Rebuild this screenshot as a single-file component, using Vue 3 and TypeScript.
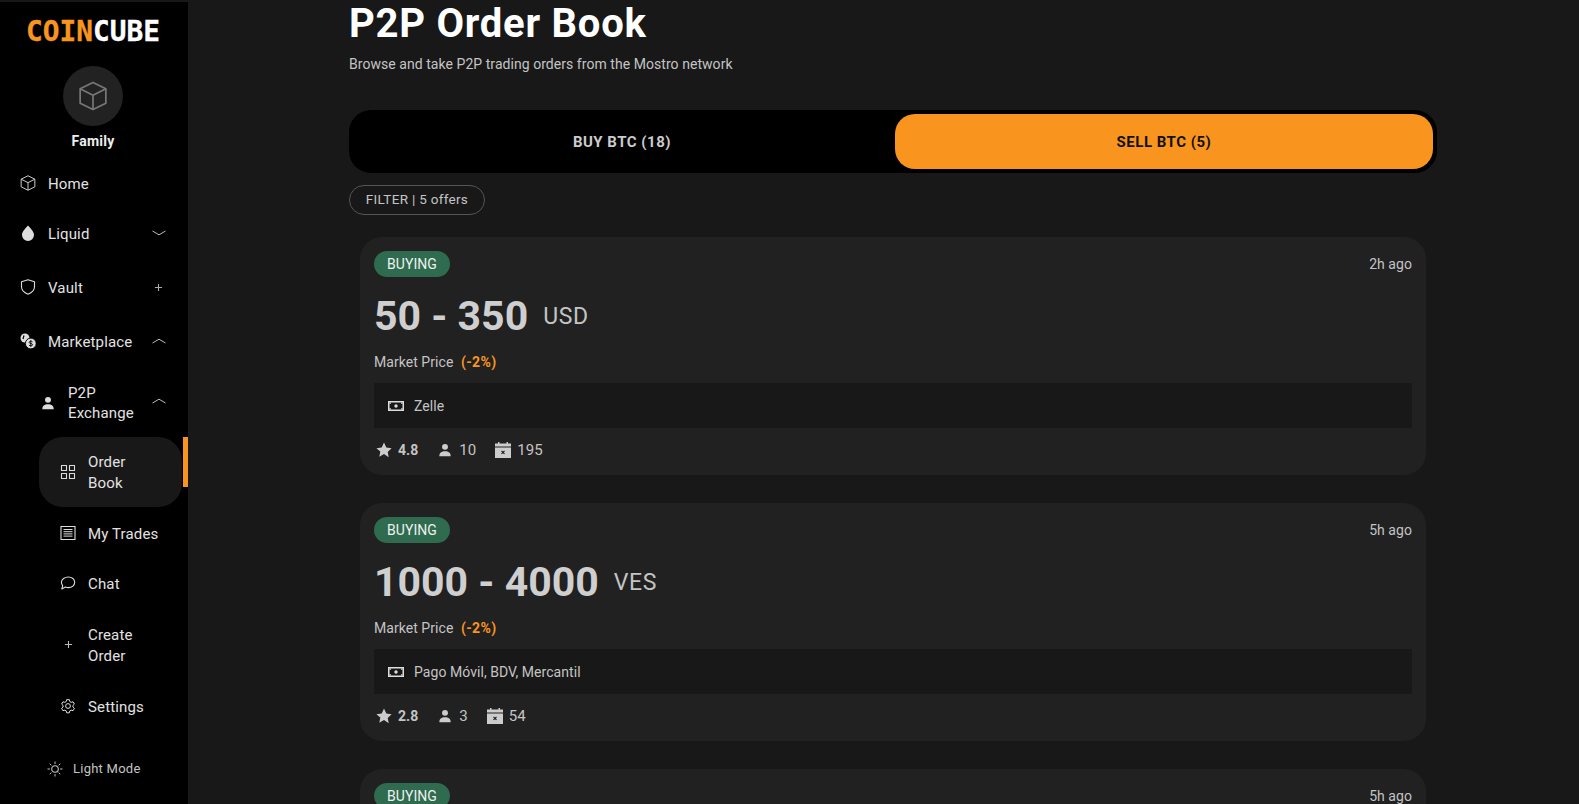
<script setup lang="ts">
interface Order { age: string; range: string; cur: string; pay: string; rating: string; people: string; trades: string }
const orders: Order[] = [
  { age: '2h ago', range: '50 - 350', cur: 'USD', pay: 'Zelle', rating: '4.8', people: '10', trades: '195' },
  { age: '5h ago', range: '1000 - 4000', cur: 'VES', pay: 'Pago Móvil, BDV, Mercantil', rating: '2.8', people: '3', trades: '54' },
  { age: '5h ago', range: '100 - 500', cur: 'USD', pay: 'Zelle', rating: '4.5', people: '8', trades: '120' }
]
</script>

<template>
  <div class="app">
    <svg class="defs">
      <symbol id="cube" viewBox="2 1.500 20 21"><path d="M12 2.500 21 7v10l-9 4.500L3 17V7zM3 7l9 4.500L21 7M12 11.500v10" fill="none" stroke="currentColor" stroke-width="1.200" stroke-linejoin="round"/></symbol>
      <symbol id="user" viewBox="0 0 16 16"><circle cx="8" cy="4.400" r="3.400" fill="currentColor"/><path d="M1.500 15c0-3.900 2.400-5.600 6.500-5.600s6.500 1.700 6.500 5.600z" fill="currentColor"/></symbol>
      <symbol id="chev-up" viewBox="0 0 16 8"><path d="M1.500 6 8 2.200 14.500 6" fill="none" stroke="currentColor" stroke-width="1"/></symbol>
      <symbol id="chev-down" viewBox="0 0 16 8"><path d="M1.500 2 8 5.800 14.500 2" fill="none" stroke="currentColor" stroke-width="1"/></symbol>
      <symbol id="plus" viewBox="0 0 10 10"><path d="M5 1v8M1 5h8" stroke="currentColor" stroke-width="1.200"/></symbol>
      <symbol id="money" viewBox="0 0 16 12"><path fill-rule="evenodd" d="M0 1h16v10H0zM1.500 2.500v7h13v-7z" fill="currentColor"/><circle cx="8" cy="6" r="1.700" fill="currentColor"/><path d="M1.500 2.500h1.500v1.300h-1.500zM13 8.200h1.500v1.300H13zM13 2.500h1.500v1.300H13zM1.500 8.200H3v1.300H1.500z" fill="currentColor"/></symbol>
      <symbol id="star" viewBox="0 0 16 16"><path d="M8 .6l2.300 4.900 5.300.7-3.900 3.700 1 5.300L8 12.100l-4.700 2.600 1-5.300L.4 6.200l5.300-.7z" fill="currentColor"/></symbol>
      <symbol id="cal" viewBox="0 0 16 16"><path fill-rule="evenodd" d="M3 0h1.500v1.500h7V0H13v1.500h3V16H0V1.500h3zM0 4.500v1h16v-1z" fill="currentColor"/><path d="M6.500 8.900l3 3M9.500 8.900l-3 3" stroke="#212121" stroke-width="1.200"/></symbol>
    </svg>

    <aside class="side">
      <div class="brand">
        <div class="logo"><span class="orange">COIN</span>CUBE</div>
        <div class="avatar"><svg class="avatar-icon"><use href="#cube" /></svg></div>
        <div class="family">Family</div>
      </div>

      <nav class="nav">
        <div class="row h50"><svg class="ic"><use href="#cube" /></svg><span>Home</span></div>
        <div class="row h50 liquid">
          <svg class="ic" viewBox="0 0 16 16"><path d="M8 .5c3.200 3.700 6 6.300 6 9.500a6 6 0 0 1-12 0C2 6.800 4.800 4.200 8 .5z" fill="currentColor"/></svg>
          <span>Liquid</span><svg class="chev"><use href="#chev-down" /></svg>
        </div>
        <div class="row h54">
          <svg class="ic" viewBox="0 0 16 16"><path d="M8 .8 14.500 2.800v5c0 3.700-2.700 6-6.500 7.400-3.800-1.400-6.500-3.700-6.500-7.400v-5z" fill="none" stroke="currentColor" stroke-width="1.100" stroke-linejoin="round"/></svg>
          <span>Vault</span><svg class="plus"><use href="#plus" /></svg>
        </div>
        <div class="row h54">
          <svg class="ic" viewBox="0 0 16 16"><circle cx="5" cy="5" r="4.500" fill="currentColor"/><path d="M4 2.500 3 6" stroke="#000" stroke-width="1.200"/><circle cx="10.800" cy="10.500" r="5.400" fill="currentColor" stroke="#000"/><path d="M12.500 8.800c-1-.9-3.300-.7-3.300.6 0 1.600 3.400.7 3.400 2.300 0 1.300-2.500 1.500-3.600.5M10.800 7.200v6.600" fill="none" stroke="#000" stroke-width=".9"/></svg>
          <span>Marketplace</span><svg class="chev"><use href="#chev-up" /></svg>
        </div>
        <div class="row sub h69">
          <svg class="ic small"><use href="#user" /></svg>
          <span class="wrap tight">P2P<br />Exchange</span><svg class="chev lift"><use href="#chev-up" /></svg>
        </div>
        <div class="active-wrap">
          <div class="row active">
            <svg class="ic" viewBox="0 0 16 16"><path d="M1.500 1.500h5v5h-5zM9.500 1.500h5v5h-5zM1.500 9.500h5v5h-5zM9.500 9.500h5v5h-5z" fill="none" stroke="currentColor" stroke-width="1.100" stroke-linejoin="round"/></svg>
            <span class="wrap">Order<br />Book</span>
          </div>
          <div class="indicator"></div>
        </div>
        <div class="row leaf h50 first-leaf">
          <svg class="ic" viewBox="0 0 16 16"><path d="M1 1.500h14v13H1z" fill="none" stroke="currentColor" stroke-width="1.100"/><path d="M3.500 4.500h9M3.500 6.700h9M3.500 8.900h9M3.500 11.100h9" stroke="currentColor" stroke-width="1"/></svg>
          <span>My Trades</span>
        </div>
        <div class="row leaf h50">
          <svg class="ic" viewBox="0 0 16 16"><path d="M8.400 2c3.600 0 6.300 2.300 6.300 5.300s-2.700 5.300-6.300 5.300c-1.100 0-2.100-.2-3-.6L1.800 14l.9-3.400C1.800 9.700 1.400 8.500 1.400 7.300 1.400 4.300 4.800 2 8.400 2z" fill="none" stroke="currentColor" stroke-width="1.100" stroke-linejoin="round"/></svg>
          <span>Chat</span>
        </div>
        <div class="row leaf h73">
          <svg class="ic plus-ic"><use href="#plus" /></svg>
          <span class="wrap">Create<br />Order</span>
        </div>
        <div class="row leaf h50">
          <svg class="ic" viewBox="0 0 24 24"><path d="m10 2.500h4l.7 2.900 2 1.100 2.900-.8 2 3.400-2.200 2.100v2.300l2.200 2.100-2 3.400-2.900-.8-2 1.100-.7 2.900h-4l-.7-2.900-2-1.100-2.900.8-2-3.400 2.200-2.100v-2.300L2.400 9.100l2-3.400 2.900.8 2-1.100z" fill="none" stroke="currentColor" stroke-width="1.500" stroke-linejoin="round"/><circle cx="12" cy="12" r="3.600" fill="none" stroke="currentColor" stroke-width="1.500"/></svg>
          <span>Settings</span>
        </div>
      </nav>

      <div class="mode">
        <svg class="sun" viewBox="0 0 16 16"><circle cx="8" cy="8" r="3.300" fill="none" stroke="currentColor" stroke-width="1.100"/><path d="M8 .5v2.400M8 13.100v2.400M.5 8h2.400M13.100 8h2.400M2.700 2.700l1.700 1.700M11.600 11.600l1.700 1.700M2.700 13.300l1.700-1.700M11.600 4.400l1.700-1.700" stroke="currentColor" stroke-width="1"/></svg>
        <span>Light Mode</span>
      </div>
    </aside>

    <main class="main">
      <div class="content">
        <h1 class="title">P2P Order Book</h1>
        <p class="subtitle">Browse and take P2P trading orders from the Mostro network</p>

        <div class="tabs">
          <div class="tab">BUY BTC (18)</div>
          <div class="tab on">SELL BTC (5)</div>
        </div>

        <div class="filter"><span>FILTER | 5 offers</span></div>

        <div class="cards">
          <article v-for="o in orders" :key="o.range" class="card">
            <div class="card-top">
              <span class="badge">BUYING</span>
              <span class="age">{{ o.age }}</span>
            </div>
            <div class="amount"><b>{{ o.range }}</b><span class="cur">{{ o.cur }}</span></div>
            <div class="market">Market Price <b class="orange">(-2%)</b></div>
            <div class="pay"><svg class="money"><use href="#money" /></svg><span>{{ o.pay }}</span></div>
            <div class="stats">
              <svg class="st star"><use href="#star" /></svg><b class="rate">{{ o.rating }}</b>
              <svg class="st user"><use href="#user" /></svg><span class="num">{{ o.people }}</span>
              <svg class="st cal"><use href="#cal" /></svg><span>{{ o.trades }}</span>
            </div>
          </article>
        </div>
      </div>
    </main>
  </div>
</template>

<style>
html, body { margin: 0; background: #181818; overflow: hidden; }
</style>

<style scoped>
.app {
  display: flex;
  height: 804px;
  overflow: hidden;
  background: #181818;
  color: #e2e2e2;
  font-family: "Roboto", "Liberation Sans", sans-serif;
  letter-spacing: 0.05px;
}
.defs { display: none; }
.orange { color: #f9951e; }

.side {
  width: 188px;
  flex: none;
  background: #000;
  border-top: 2px solid #181818;
  box-sizing: border-box;
  display: flex;
  flex-direction: column;
}
.brand { width: 186px; }
.logo {
  margin-top: 12px;
  text-align: center;
  font-family: "DejaVu Sans Mono", monospace;
  font-weight: 700;
  font-size: 27.800px;
  line-height: 36px;
  color: #fff;
  letter-spacing: 0;
  -webkit-text-stroke: 0.3px currentColor;
}
.avatar {
  width: 60px;
  height: 60px;
  margin: 16px auto 0;
  border-radius: 50%;
  background: #222;
  display: flex;
  align-items: center;
  justify-content: center;
  color: #777;
}
.avatar-icon { width: 30px; height: 30px; }
.family {
  margin-top: 5px;
  text-align: center;
  font-size: 14px;
  line-height: 20px;
  font-weight: 700;
  color: #eee;
  letter-spacing: 0.25px;
}
.nav { margin-top: 7px; display: flex; flex-direction: column; font-size: 15px; line-height: 21px; letter-spacing: 0.15px; }
.row {
  display: flex;
  align-items: center;
  gap: 12px;
  padding: 0 21px 0 20px;
  box-sizing: border-box;
}
.row > span { padding-top: 2px; }
.row > span.tight { padding-top: 0; line-height: 20px; }
.h50 { height: 50px; }
.h54 { height: 54px; }
.h69 { height: 69px; }
.h73 { height: 73px; }
.liquid { margin-bottom: 2px; }
.first-leaf { margin-top: 1px; }
.ic { width: 16px; height: 16px; flex: none; color: #ddd; }
.ic.small { width: 14px; height: 14px; margin: 0 1px; }
.chev { width: 16px; height: 8px; margin-left: auto; color: #bbb; }
.chev.lift { margin-bottom: 4px; }
.plus { width: 9px; height: 9px; margin: 0 4px 0 auto; color: #aaa; }
.plus-ic { width: 9px; height: 9px; margin: 0 3.500px; color: #bbb; }
.sub { padding-left: 40px; }
.wrap { display: block; }
.active-wrap { display: flex; align-items: flex-start; height: 70px; }
.active {
  width: 143px;
  height: 70px;
  margin-left: 39px;
  padding-left: 21px;
  background: #181818;
  border-radius: 24px;
}
.indicator { width: 5px; height: 50px; margin-left: 1px; background: #f9951e; }
.leaf { padding-left: 60px; }
.mode {
  margin-top: auto;
  margin-bottom: 25px;
  display: flex;
  align-items: center;
  gap: 10px;
  padding-left: 47px;
  font-size: 13px;
  line-height: 20px;
  color: #c4c4c4;
  letter-spacing: 0.25px;
}
.sun { width: 16px; height: 16px; }

.main { flex: 1; min-width: 0; }
.content { width: 1088px; margin-left: 161px; }
.title {
  margin: 0;
  padding-top: 2px;
  font-size: 40px;
  line-height: 44px;
  font-weight: 700;
  color: #fff;
  letter-spacing: 0.75px;
}
.subtitle {
  margin: 8px 0 0;
  font-size: 14px;
  line-height: 20px;
  color: #c4c4c4;
}
.tabs {
  margin-top: 36px;
  height: 63px;
  padding: 4px;
  box-sizing: border-box;
  background: #000;
  border-radius: 22px;
  display: flex;
}
.tab {
  flex: 1;
  display: flex;
  align-items: center;
  justify-content: center;
  font-size: 15px;
  font-weight: 700;
  color: #ccc;
  border-radius: 20px;
  letter-spacing: 0.5px;
}
.tab.on { background: #f9951e; color: #111; margin-left: 4px; }
.filter {
  margin-top: 12px;
  width: 136px;
  height: 30px;
  padding-bottom: 2px;
  box-sizing: border-box;
  border: 1px solid #555;
  border-radius: 15px;
  display: flex;
  align-items: center;
  justify-content: center;
  font-size: 13.500px;
  color: #c4c4c4;
  letter-spacing: 0.3px;
}
.cards { margin: 22px 11px 0; display: flex; flex-direction: column; gap: 28px; }
.card {
  height: 238px;
  flex: none;
  box-sizing: border-box;
  padding: 14px 14px 0;
  background: #212121;
  border-radius: 22px;
}
.card-top { display: flex; justify-content: space-between; align-items: center; height: 26px; }
.badge {
  width: 76px;
  height: 26px;
  border-radius: 13px;
  background: #2e6b4f;
  color: #f0f0f0;
  font-size: 14px;
  display: flex;
  align-items: center;
  justify-content: center;
}
.age { font-size: 14px; color: #c4c4c4; }
.amount { margin-top: 13px; height: 52px; display: flex; align-items: center; gap: 15px; color: #cfcfcf; }
.amount b { font-size: 41px; font-weight: 700; line-height: 52px; letter-spacing: 0; }
.cur { font-size: 23px; color: #c4c4c4; letter-spacing: 0.6px; }
.market { margin-top: 9px; font-size: 14px; line-height: 22px; color: #c4c4c4; }
.market b { margin-left: 4px; font-weight: 700; letter-spacing: 0.4px; }
.pay {
  margin-top: 10px;
  height: 45px;
  background: #181818;
  display: flex;
  align-items: center;
  gap: 10px;
  padding-left: 14px;
  font-size: 14px;
  color: #c4c4c4;
}
.money { width: 16px; height: 12px; color: #ddd; }
.stats {
  margin-top: 11px;
  height: 22px;
  display: flex;
  align-items: center;
  font-size: 15px;
  color: #c4c4c4;
}
.st { width: 16px; height: 16px; color: #ccc; }
.star { margin: 0 6px 0 2px; }
.user { margin: 0 7px 0 20px; width: 14px; height: 14px; }
.cal { margin: 0 6px 0 19px; }
.rate { font-weight: 700; font-size: 14px; }
</style>
